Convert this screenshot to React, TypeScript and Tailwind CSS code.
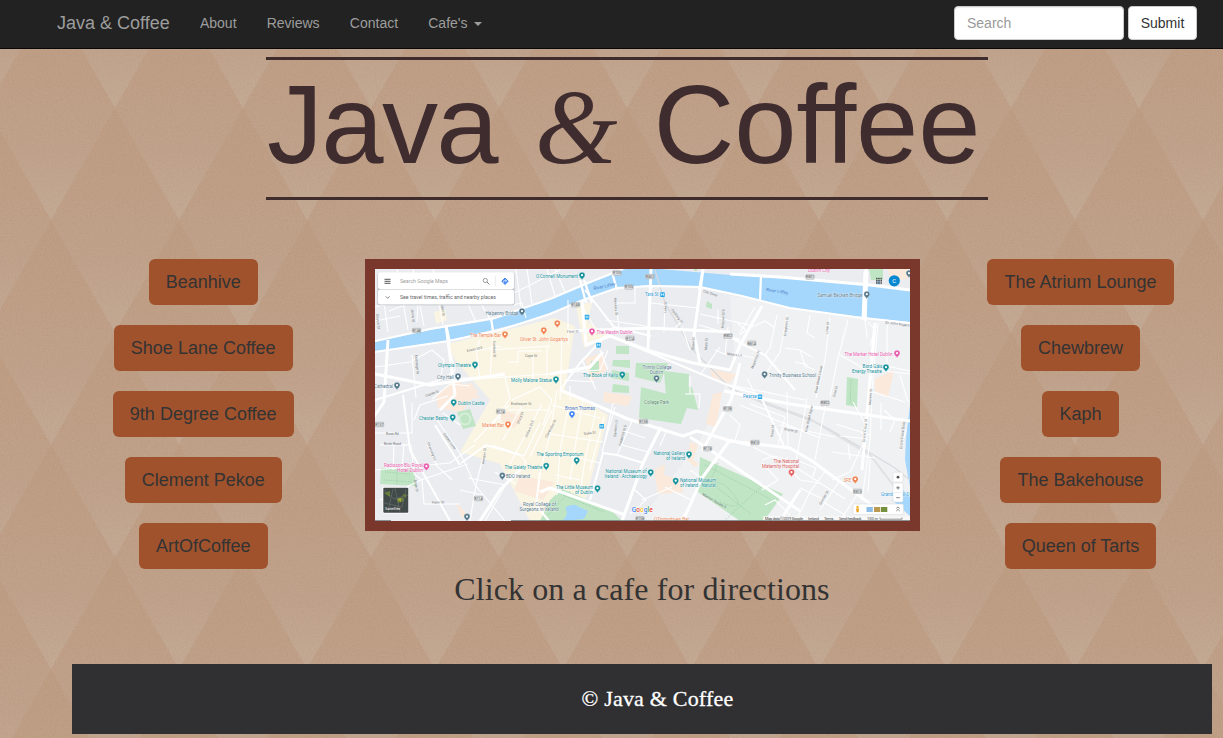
import React from "react";

const leftCafes = ["Beanhive", "Shoe Lane Coffee", "9th Degree Coffee", "Clement Pekoe", "ArtOfCoffee"];
const rightCafes = ["The Atrium Lounge", "Chewbrew", "Kaph", "The Bakehouse", "Queen of Tarts"];
const navLinks = ["About", "Reviews", "Contact"];

const TEAL = "#12909a";
const SLATE = "#54788c";
const ORANGE = "#f08350";
const PINK = "#e858ac";
const BLUE = "#2f9bd8";

// [text, x, baseline, width, colour]
type Label = [string, number, number, number, string];
const labels: Label[] = [
  ["O'Connell Monument", 536, 278, 42, TEAL],
  ["Ha'penny Bridge", 485.5, 314.5, 33, SLATE],
  ["The Temple Bar", 470, 336.8, 31, ORANGE],
  ["Oliver St. John Gogartys", 520, 341, 48, ORANGE],
  ["Olympia Theatre", 438, 367.4, 33, TEAL],
  ["City Hall", 437, 379.2, 17, SLATE],
  ["Molly Malone Statue", 511, 382, 41, TEAL],
  ["Cathedral", 374, 388.4, 19, SLATE],
  ["Tara St", 645, 296.4, 13.5, BLUE],
  ["The Westin Dublin", 596.5, 334.4, 36, PINK],
  ["The Book of Kells", 583, 377.4, 35, TEAL],
  ["Trinity College", 642.5, 369, 29, SLATE],
  ["Dublin", 650, 374, 13, SLATE],
  ["Dublin City", 808, 272.4, 22, PINK],
  ["Samuel Beckett Bridge", 817.5, 297.2, 45, SLATE],
  ["The Marker Hotel Dublin", 844.5, 356, 48, PINK],
  ["Bord Gáis", 862.5, 367.6, 20, TEAL],
  ["Energy Theatre", 852, 373, 30, TEAL],
  ["Trinity Business School", 769, 377.2, 47, SLATE],
  ["Pearse", 743, 398.4, 14, BLUE],
  ["Dublin Castle", 458, 405, 26.5, TEAL],
  ["Chester Beatty", 419, 420, 29, TEAL],
  ["Market Bar", 482, 426.6, 22, ORANGE],
  ["Brown Thomas", 565, 409.8, 30, "#4272bd"],
  ["College Park", 644, 403.6, 25, "#47825c"],
  ["Radisson Blu Royal", 384, 466.6, 39, PINK],
  ["Hotel Dublin", 397, 471.6, 26, PINK],
  ["The Sporting Emporium", 536.5, 456, 47, TEAL],
  ["The Gaiety Theatre", 504.5, 468.6, 38, TEAL],
  ["BDO Ireland", 506, 478.2, 24, SLATE],
  ["Royal College of", 523, 505.8, 33, SLATE],
  ["Surgeons in Ireland", 519.5, 511, 39, SLATE],
  ["The Little Museum", 556, 489.4, 37, TEAL],
  ["of Dublin", 575, 494.2, 18, TEAL],
  ["National Museum of", 605.5, 473.2, 41, TEAL],
  ["Ireland - Archaeology", 604.5, 478, 42.5, TEAL],
  ["National Gallery", 653.5, 455, 31.5, TEAL],
  ["of Ireland", 666, 460, 19, TEAL],
  ["National Museum", 680, 482, 36, TEAL],
  ["of Ireland - Natural...", 680, 487, 39, TEAL],
  ["The National", 773.5, 463, 25.5, "#d65859"],
  ["Maternity Hospital", 762, 468.2, 37, "#d65859"],
  ["3FE", 843.5, 482.2, 7.5, ORANGE],
  ["Grand Canal D", 881, 496.4, 28.5, BLUE],
  ["O'Donoghues Bar", 654, 520.6, 35, ORANGE],
];

// [x, y, colour]
const pins: [number, number, string][] = [
  [582, 276, TEAL], [522, 312, SLATE], [505, 335, ORANGE], [543.8, 331, ORANGE], [557.3, 324, ORANGE],
  [475, 365.4, TEAL], [458, 377, SLATE], [397, 386, SLATE], [556, 380, TEAL], [592, 332, PINK],
  [622.3, 375.3, TEAL], [656.5, 379, SLATE], [866.8, 295, SLATE], [897, 354, PINK], [886, 368, TEAL],
  [764.6, 375, SLATE], [453.7, 403, TEAL], [452.7, 418, TEAL], [508, 425, ORANGE], [572, 414.7, "#4285f4"],
  [426.4, 467, PINK], [546.2, 466.5, TEAL], [502.3, 476.3, SLATE], [576.7, 461, TEAL], [597.5, 489, TEAL],
  [650.7, 473, TEAL], [689, 455, TEAL], [675.7, 481.5, TEAL], [791.5, 473, "#e85e60"], [855.2, 480, ORANGE],
  [467, 517.4, SLATE], [909, 274, SLATE],
];

const shields: [string, number, number][] = [
  ["R148", 416.6, 330.5], ["R105", 617, 273], ["R802", 650, 276.5], ["R105", 629, 287], ["R148", 575.5, 304.7],
  ["R114", 630, 338.3], ["R802", 728, 336], ["R801", 810, 277], ["R814", 751.7, 343.2], ["R137", 379.5, 424.5],
  ["R114", 500.6, 411.4], ["R138", 643.5, 421.5], ["R138", 727.6, 408.8], ["R118", 707.6, 448.7], ["R802", 825, 403],
  ["R815", 755, 442.5], ["R815", 857.5, 491.3], ["R114", 478.5, 498.5], ["R138", 640, 518.8],
];

// [text, x, y, angle]
const streets: [string, number, number, number][] = [
  ["Capel St", 441, 303, 84], ["Jervis St", 411, 309, 84], ["Church St", 376, 314, 84],
  ["Exchange St", 415, 355, 85], ["Essex St E", 467, 352, -12], ["Eustace St", 493, 341, 88],
  ["Cope St", 525, 357, 0], ["Castle St", 426, 397, -20], ["Fleet St", 567, 333, -4],
  ["Hawkins St", 614, 298, 85], ["Luke St", 666, 313, -86], ["Poolbeg St", 671, 310, 52],
  ["City Quay", 703, 292, 18], ["Shaw St", 694, 350, -86], ["Mark St", 707, 350, -86],
  ["Princes St S", 724, 328, -88], ["Mark's Ln", 727, 355, 6], ["Creighton St", 786, 336, -83],
  ["Lime St", 828, 334, -84], ["Sir John Rogers", 885, 323.5, 7], ["Magennis Pl", 753, 369, -68],
  ["Erne Street Lower", 817, 393, -78], ["Erne St", 835, 397, -75], ["Macken St", 871, 405, -86],
  ["Ross Rd", 386, 434.8, 0], ["Bride Road", 384, 445, 0], ["Chancery Ln", 427, 443, 68],
  ["Golden Lane", 443, 434, 54], ["Bride St", 414, 480, 80], ["Peter St", 432, 503.8, -2],
  ["Aungier St", 484, 464, -82], ["Exchequer St", 511, 405.4, 0], ["Drury St", 519, 424, -68],
  ["William St S", 527, 438, -68], ["Clarendon St", 547, 438, -62], ["Duke St", 584, 435, -8],
  ["Frederick St S", 621, 446, -75], ["Dawson Ln", 616, 437, -85], ["Ross St", 773, 437, -84],
  ["Boyne St", 784, 430, 12], ["Erne Street Upper", 807, 432, -77], ["Grand Canal St", 865, 442, -84],
  ["Merrion Square S", 702, 495, 30], ["Grattan St", 821, 505, -60], ["Grand Canal Quay", 902, 449, -84],
  ["River Liffey", 594, 290, -12],
];

const minorRoads =
  "M380 274L388 332M397 269L408 330M413 269L424 326M375 307L440 289M389 311L418 300L417 322M433 269L443 325M467 302L475 320M480 302L490 319" +
  "M375 321L400 316M405 297L434 291M516 269L521 307M527 269L532 304M547 269L555 296M555 269L565 292M500 300L560 270M512 305L522 303L526 318" +
  "M412 355L416 398M448 341L455 370L446 377M375 367L410 362L432 350M432 350L444 360L440 380M493 330L490 378M480 340L476 350L480 380" +
  "M518 351H542M518 351V362H508M533 356V380M547 345V378M562 338L560 400M474 351L501 346M490 350L550 346M490 378L550 374L600 370L608 350" +
  "M432 399L450 384L470 386M505 378L510 398L490 430M512 400L540 387L552 400L543 425M460 378L490 378M570 386V400M582 360L596 390M564 380L594 382M600 350L608 370" +
  "M448 396L420 405L414 420M375 433H412V403M380 445H411L414 474L422 480M375 470L450 463L475 445M435 417L461 455L475 485L505 521M427 444L437 466L452 480M443 413L460 425" +
  "M394 444L393 470M404 444L402 469M422 480L424 504H460M380 500L421 480L468 464M486 445L476 485L470 521M468 478L505 485L522 466M482 495L460 490M505 486L485 521" +
  "M474 442L509 405M492 445L524 456L540 423M502 407L498 425M523 404L503 440M542 404L510 464M552 410L530 457M508 410H550M495 472L516 484M520 455L526 462L513 480" +
  "M557 390L550 434L540 473L536 505M568 410L560 450L557 495M583 400L577 435L570 480M596 410L585 460L580 493M604 417L590 470M550 434L603 442M549 451L600 463M555 475L580 480M552 405L600 418M613 403L602 454M615 407L602 452" +
  "M633 419L617 455M622 445L648 452M624 431L645 438M666 432L660 446M635 490L646 500L630 514M665 487L693 501L680 521M690 470L702 478M642 500L672 487" +
  "M606 320L651 327M568 300V345M584 310L595 328M635 288V303H616M616 303L619 328M651 303L698 308M665 302L664 332M676 315L682 321L675 328M682 327L690 350M700 314L750 325M699 325L728 333M718 324V310M728 327L725 355" +
  "M715 350L727 355M720 347L700 375M755 307L740 333M777 315L770 348L765 355M787 315L780 352L765 375M810 315L807 333L815 338M830 318L825 360L816 398M848 320L838 358L830 397M868 322L875 330L870 345M878 323L872 391L870 440L862 500M865 320L867 337M887 325V366L910 371" +
  "M735 321L746 330L740 335M752 327L765 321L775 328M733 353L754 358M755 350L765 355M785 348L800 350L805 366L815 370M800 350L812 357M840 355L865 369L910 374M795 362L808 365M730 385L805 400M747 378L757 398M730 415L740 425L735 440M740 405L800 430L820 438M750 404L785 417L778 445" +
  "M787 392L788 446M807 398L796 462M826 403L815 460M779 425L835 437M853 402L865 424M836 424L870 435M840 436L868 439M848 444L850 460M832 452L875 458M865 440L850 472L832 480M906 430L900 450M884 410L895 420L890 432M870 460L868 492M873 392L905 402M881 403V430M900 375L908 402" +
  "M753 447L800 470L845 499M762 460L774 456L790 460M762 463L778 480L762 490M785 463L800 480L820 483M796 460L816 468L812 478M826 470L810 492L796 521M840 480L820 510M860 490L840 521M765 505L775 500L790 515M800 488L825 500M820 500L845 515M685 394H700L699 408M690 376V394";

const mediumRoads =
  "M375 341L430 329L495 318L550 299L588 283L623 269M375 352L448 341L500 330L550 314L583 300L617 288L650 286L700 287L742 296L790 308L855 317L910 323" +
  "M440 380L375 400M585 290L614 327L651 336M614 327L580 363L560 390M403 395L410 450L430 485L450 521M461 463L486 445L520 455M540 473L536 505L549 521M460 465L435 425M610 336L730 386L760 395L784 446M720 330L740 343L765 355L795 390M728 336L740 340" +
  "M617 455L643 463M603 453L617 455M603 453L590 500";

const majorRoads =
  "M369 424L384 402L388 340M375 374L430 385L505 374M446 325L455 395L440 410M582 300L586 345L610 336L650 351L693 363M568 331L650 328L730 332M703 269L694 335L700 363M651 269L648 349M550 374L590 367L603 352M560 390L582 399L628 419L683 436L697 431L728 440L750 445" +
  "M693 363L730 370L740 345L762 306M740 363L731 400L702 451M690 437L710 450L800 511M730 441L790 448L812 461L880 511M622 521L643 463L661 427M683 521L702 478L730 440M780 521L800 490M875 323L869 390M866 269L865 321M875 325L862 470M724 391L790 404L910 421" +
  "M480 521L500 490L520 470M540 492L550 488L625 515M730 274L780 277L870 285L910 290";

function Street({ item }: { item: [string, number, number, number] }) {
  const [text, x, y, angle] = item;
  return (
    <text x={x} y={y} fontSize={text === "River Liffey" ? "4.5" : "3.5"} fill={text === "River Liffey" ? "#4c80c8" : "#777c80"} transform={`rotate(${angle} ${x} ${y})`}>
      {text}
    </text>
  );
}

function Pin({ x, y, color }: { x: number; y: number; color: string }) {
  return (
    <g transform={`translate(${x} ${y})`}>
      <path d="M0 4C-.5 2.2-3 1.1-3-.8A3 3 0 0 1 3-.8C3 1.1.5 2.2 0 4Z" fill={color} stroke="#fff" strokeWidth=".3" />
      <circle cy="-.8" r="1.1" fill="#fff" />
    </g>
  );
}

function CityMap() {
  return (
    <svg viewBox="375 269 535 252" className="block h-[252px] w-[535px]" fontFamily="Roboto, sans-serif">
      <rect x="375" y="269" width="535" height="252" fill="#eaecef" />
      <path d="M730 296L910 323V521H640L700 440L735 365Z" fill="#f0f1f3" />
      <path d="M448 344L555 318L575 326L565 390L608 415L580 521H530L500 464L460 452L490 400L455 360ZM576 306L592 302L588 322L610 336L584 348ZM434 312L445 309L447 320L436 324Z" fill="#faf4e2" />
      <g fill="#fbeadb">
        <path d="M436 396L453 380L478 390L462 412L438 408ZM452 386L472 383L479 398L462 399ZM585 358L603 353L606 370L590 382ZM604 392L632 396L628 406L603 402ZM710 369L736 374L730 383L712 377ZM713 394L722 392L716 427L706 424ZM520 476L555 482L543 500L514 491ZM654 470L665 464L664 475L680 480L684 492L658 494ZM690 442L698 445L693 460L699 464L695 467L687 460ZM875 379L894 370L888 397L875 391ZM500 410L524 416L514 428L502 422ZM455 501L468 515L462 518ZM888 269H908V279L890 280Z" />
      </g>
      <path d="M375 342L430 330L492 320L522 309L555 298L583 284L613 273L626 269H660L730 275L820 281L910 289V322L870 318L790 308L740 295L700 286L650 285L617 288L583 300L550 313L532 320L492 330L448 341L375 351ZM910 405L906 438L905 460L910 487ZM903 490L910 497V516L892 500ZM877 269H880V290H877Z" fill="#a5d6fb" />
      <g fill="#bfe5c5">
        <path d="M616 346H629V354H616ZM613 360H630V368L612 366ZM612 370L629 373V381L611 378ZM591 361H599V372H590ZM613 384L629 386V393L612 392ZM636 363L668 363L660 383L635 377ZM664 371L689 374L688 400L666 396ZM641 387L690 400L681 424L639 418ZM687 386L692 387L698 410L687 408ZM457 412L470 409L476 426L463 429ZM381 468L414 470L416 486L380 484ZM700 457L783 494L764 521H740L698 492ZM562 489L610 509L622 521H540L550 500ZM707 301L712 304V309L706 307ZM847 377L858 379L857 407L846 405ZM869 269H883V280H871Z" />
        <path d="M694 269H697V271H694Z" />
      </g>
      <circle cx="465" cy="419" r="5.5" fill="none" stroke="#d6eed9" strokeWidth="2" />
      <g fill="none" stroke="#92c6a0" strokeWidth=".7" strokeDasharray="1.2 1.2">
        <path d="M705 465L770 499M718 463L710 482L751 514M764 484L724 521M708 485Q721 477 734 495T720 502M385 472L410 474M384 480L412 482M397 470V485M563 495L604 512M570 491L548 515M851 380L850 404" />
      </g>
      <path d="M565 508Q574 502 579 507L588 511L584 519L562 521Q570 514 565 508Z" fill="#a5d6fb" />
      <path d="M655 270L665 303L692 349L730 388L760 402L820 424L862 448L895 468L910 480" fill="none" stroke="#d8dadd" strokeWidth="1.2" />
      <path d="M745 395L810 419L870 455L897 490" fill="none" stroke="#dfe1e3" strokeWidth="2" />
      <path d={minorRoads} fill="none" stroke="#fff" strokeWidth="1.1" />
      <path d={mediumRoads} fill="none" stroke="#fff" strokeWidth="2" />
      <path d={majorRoads} fill="none" stroke="#fff" strokeWidth="3" strokeLinejoin="round" />
      <path d="M446 325L450 343M491 318L493 331M584 280L592 303M580 280L586 303M612 272L617 290M703 269L699 290M761 276L760 300" stroke="#fff" strokeWidth="2.3" />
      <path d="M866 271L864 320" stroke="#fff" strokeWidth="5" />
      {streets.map((s, i) => <Street key={i} item={s} />)}
      <text x="766" y="291" fontSize="4.5" fill="#4c80c8" transform="rotate(9 766 291)">River Liffey</text>
      {shields.map(([text, x, y], i) => (
        <g key={i}>
          <rect x={x - 4.2} y={y - 2.2} width="8.4" height="4.4" rx=".6" fill="#e4e5e6" stroke="#a3a7aa" strokeWidth=".6" />
          <text x={x} y={y + 1.3} fontSize="3.4" textAnchor="middle" fill="#55595c">{text}</text>
        </g>
      ))}
      {labels.map(([text, x, y, width, color]) => (
        <text key={text} x={x} y={y} fontSize="4.9" fill={color} textLength={width} lengthAdjust="spacingAndGlyphs" stroke="#fff" strokeWidth=".4" paintOrder="stroke">
          {text}
        </text>
      ))}
      {pins.map(([x, y, color], i) => <Pin key={i} x={x} y={y} color={color} />)}
      {[[662.5, 294.5], [587, 317], [598.5, 345], [760, 396.7], [601.7, 426.2]].map(([x, y]) => (
        <g key={x}>
          <rect x={x - 2.2} y={y - 2.2} width="4.4" height="4.6" rx=".5" fill="#1fa5e8" />
          <path d={`M${x - 1} ${y - 1.3}V${y + 1.3}M${x + 1} ${y - 1.3}V${y + 1.3}M${x - 1} ${y}H${x + 1}`} stroke="#fff" strokeWidth=".6" />
        </g>
      ))}

      <rect x="377.5" y="273" width="137" height="32.3" rx="2" fill="#b9bcc0" />
      <rect x="378" y="272.5" width="136" height="16.5" rx="2" fill="#fff" />
      <rect x="378" y="289.6" width="136" height="14.8" rx="2" fill="#fff" />
      <path d="M384.5 279.4H390.5M384.5 281.4H390.5M384.5 283.4H390.5" stroke="#777" strokeWidth="1.1" />
      <text x="400" y="283.2" fontSize="5.3" fill="#a0a0a0" textLength="48" lengthAdjust="spacingAndGlyphs">Search Google Maps</text>
      <circle cx="485.3" cy="280.5" r="2.1" fill="none" stroke="#929292" strokeWidth=".9" />
      <path d="M487 282L489.3 284.4M385.8 296.4L387.7 298.3L389.6 296.4" fill="none" stroke="#777" strokeWidth=".9" />
      <path d="M495.5 276V286" stroke="#e2e2e2" strokeWidth=".6" />
      <path d="M505 278L508.2 281.2L505 284.4L501.8 281.2Z" fill="#4285f4" stroke="#4285f4" strokeLinejoin="round" />
      <path d="M503.7 282.6V280.7H506.3M505.4 279.5L506.8 280.7L505.4 282" fill="none" stroke="#fff" strokeWidth=".7" />
      <text x="400" y="299.1" fontSize="5.2" fill="#666" textLength="96" lengthAdjust="spacingAndGlyphs">See travel times, traffic and nearby places</text>

      {[876.8, 879, 881.2].map((x) => [278.6, 280.8, 283].map((y) => (
        <rect key={`${x}-${y}`} x={x - .8} y={y - .8} width="1.6" height="1.6" fill="#555" />
      )))}
      <circle cx="894.3" cy="280.8" r="5.6" fill="#0888d0" />
      <text x="894.3" y="282.9" fontSize="6" textAnchor="middle" fill="#fff">C</text>

      <rect x="382.5" y="487" width="26.5" height="26.5" rx="1.5" fill="#fff" />
      <rect x="383.3" y="487.8" width="25" height="25" rx="1" fill="#414a48" />
      <path d="M384 490L394 499L408 495M388 512L393 489M384 503L402 507L406 489M400 512L395 488" stroke="#5f6968" strokeWidth=".8" fill="none" />
      <path d="M397 499L403 497L404 501L398 503ZM402 495L406 494L406 498ZM384 493L390 491L390 497Z" fill="#687f3c" />
      <path d="M397 499L401 498L401 502Z" fill="#a5aa39" />
      <text x="385" y="510.2" fontSize="4.3" fill="#fff">Satellite</text>

      <text x="631.8" y="511.5" fontSize="6.7" fontWeight="500" textLength="21" stroke="#fff" strokeWidth=".8" paintOrder="stroke">
        <tspan fill="#4285f4">G</tspan><tspan fill="#ea4335">o</tspan><tspan fill="#fbbc05">o</tspan><tspan fill="#4285f4">g</tspan><tspan fill="#34a853">l</tspan><tspan fill="#ea4335">e</tspan>
      </text>

      <rect x="893" y="472.2" width="10" height="10" rx="1.5" fill="#fff" stroke="#d5d7d8" strokeWidth=".5" />
      <rect x="893" y="483" width="10" height="19" rx="1.5" fill="#fff" stroke="#d5d7d8" strokeWidth=".5" />
      <circle cx="898" cy="477.2" r="1.4" fill="#555" />
      <path d="M896.2 487.8H899.8M898 486V489.6M896.2 497.7H899.8" stroke="#666" strokeWidth=".8" />
      <path d="M894.5 492.5H901.5" stroke="#ddd" strokeWidth=".5" />
      <rect x="853" y="504" width="50.5" height="10.4" rx="1.5" fill="#fff" stroke="#d5d7d8" strokeWidth=".5" />
      <circle cx="857.5" cy="507" r="1.2" fill="#f6ad20" />
      <path d="M856 508.5H859L858.5 512.3H856.6Z" fill="#eba020" />
      <rect x="866.5" y="507" width="6.3" height="5" fill="#8fbfe9" />
      <rect x="874" y="507" width="6.3" height="5" fill="#bb9951" />
      <rect x="881" y="507" width="6.3" height="5" fill="#73913f" />
      <path d="M896.3 508.5L898 506.9L899.7 508.5M896.3 511L898 509.4L899.7 511" fill="none" stroke="#555" strokeWidth=".7" />

      <path d="M763 516.2H910V521H763Z" fill="#f8f8f8" opacity=".85" />
      <g fontSize="3.9" fill="#444">
        <text x="765" y="519.6" textLength="38">Map data ©2019 Google</text>
        <text x="808" y="519.6" textLength="11">Ireland</text>
        <text x="824" y="519.6" textLength="9.5">Terms</text>
        <text x="839" y="519.6" textLength="22.5">Send feedback</text>
        <text x="867" y="519.6" textLength="11">100 m</text>
      </g>
      <path d="M880 517.5V519.2H902V517.5" fill="none" stroke="#555" strokeWidth=".6" />
      <path d="M375 520.6H391M511 520.6H910" stroke="#666b70" strokeWidth=".8" />
    </svg>
  );
}

function DiamondBackdrop() {
  return (
    <svg className="absolute inset-0 -z-10 h-full w-full" aria-hidden="true">
      <defs>
        <linearGradient id="diamondFill" x1="0" y1="0" x2="0" y2="1">
          <stop offset="0" stopColor="#bc9c82" />
          <stop offset=".35" stopColor="#be9e85" />
          <stop offset=".65" stopColor="#bfa089" />
          <stop offset="1" stopColor="#c2a993" />
        </linearGradient>
        <pattern id="diamonds" width="128" height="224.6" patternUnits="userSpaceOnUse" patternTransform="translate(51 -4.3)">
          <path d="M0 0L64 112.3L0 224.6L-64 112.3Z" fill="url(#diamondFill)" />
          <path d="M128 0L192 112.3L128 224.6L64 112.3Z" fill="url(#diamondFill)" />
          <path d="M64-112.3L128 0L64 112.3L0 0Z" fill="url(#diamondFill)" />
          <path d="M64 112.3L128 224.6L64 336.9L0 224.6Z" fill="url(#diamondFill)" />
        </pattern>
        <filter id="paper" x="0" y="0" width="100%" height="100%" colorInterpolationFilters="sRGB">
          <feTurbulence type="fractalNoise" baseFrequency=".6" numOctaves="2" seed="4" />
          <feColorMatrix type="matrix" values="1 0 0 0 0  1 0 0 0 0  1 0 0 0 0  0 0 0 0 1" />
        </filter>
      </defs>
      <rect width="100%" height="100%" fill="#be9e86" />
      <rect width="100%" height="100%" fill="url(#diamonds)" />
      <rect width="100%" height="100%" filter="url(#paper)" className="opacity-[.12] mix-blend-soft-light" />
    </svg>
  );
}

function CafeColumn({ cafes }: { cafes: string[] }) {
  return (
    <div className="flex w-[285px] flex-col items-center gap-5">
      {cafes.map((cafe) => (
        <button key={cafe} className="h-[46px] rounded-md bg-[#a0522d] px-[17px] text-[18px] leading-6 text-[#333]">
          {cafe}
        </button>
      ))}
    </div>
  );
}

export default function App() {
  return (
    <div className="relative isolate h-[738px] w-[1223px] overflow-hidden font-['Liberation_Sans',Arial,sans-serif]">
      <DiamondBackdrop />
      <nav className="flex h-[49px] items-center justify-between border-b border-[#080808] bg-[#222] pr-[26px] pl-[57px] text-[14px] text-[#9d9d9d]">
        <div className="flex items-center gap-[30.2px] pb-0.5">
          <a className="text-[18px]">Java &amp; Coffee</a>
          {navLinks.map((link) => <a key={link}>{link}</a>)}
          <a className="flex items-center gap-1.5">
            Cafe's
            <span className="mt-0.5 border-x-4 border-t-4 border-x-transparent border-t-[#9d9d9d]" />
          </a>
        </div>
        <form className="flex gap-1 pb-0.5">
          <input placeholder="Search" className="h-[34px] w-[170px] rounded-sm border border-[#ccc] bg-white px-3 text-[14px] shadow-[inset_0_1px_1px_rgba(0,0,0,.075)] placeholder:text-[#999]" />
          <button type="button" className="h-[34px] w-[69px] rounded-sm border border-[#ccc] bg-white text-[14px] text-[#333]">Submit</button>
        </form>
      </nav>

      <header className="mt-2 ml-[266px] h-[143px] w-[722px] border-y-[3px] border-[#3f2c2c]">
        <h1 className="pt-px pl-px text-[112px] leading-[128px] whitespace-nowrap text-[#3f2c2e]">
          <span className="tracking-[-1.7px]">Java</span>{" "}
          <span className="mr-[5px] ml-[7px] font-['Liberation_Serif',serif] text-[106px] leading-none italic">&amp;</span>{" "}
          <span className="tracking-[-.2px]">Coffee</span>
        </h1>
      </header>

      <main className="mt-[59px] flex h-[405px] items-start pl-[61px]">
        <CafeColumn cafes={leftCafes} />
        <section className="ml-[19px] flex w-[555px] flex-col items-center">
          <div className="border-[10px] border-[#7a372c]">
            <CityMap />
          </div>
          <h2 className="mt-10 font-['Liberation_Serif',serif] text-[32px] leading-[36px] tracking-[.1px] whitespace-nowrap text-[#333]">
            Click on a cafe for directions
          </h2>
        </section>
        <div className="ml-[18.5px] shrink-0">
          <CafeColumn cafes={rightCafes} />
        </div>
      </main>

      <footer className="ml-[72px] flex h-[70px] w-[1140px] items-center justify-center bg-[#303032] pb-0.5 pl-[31px] font-['Liberation_Serif',serif] text-[22px] tracking-[.2px] whitespace-nowrap text-white [-webkit-text-stroke:.3px_white]">
        © Java &amp; Coffee
      </footer>
    </div>
  );
}
